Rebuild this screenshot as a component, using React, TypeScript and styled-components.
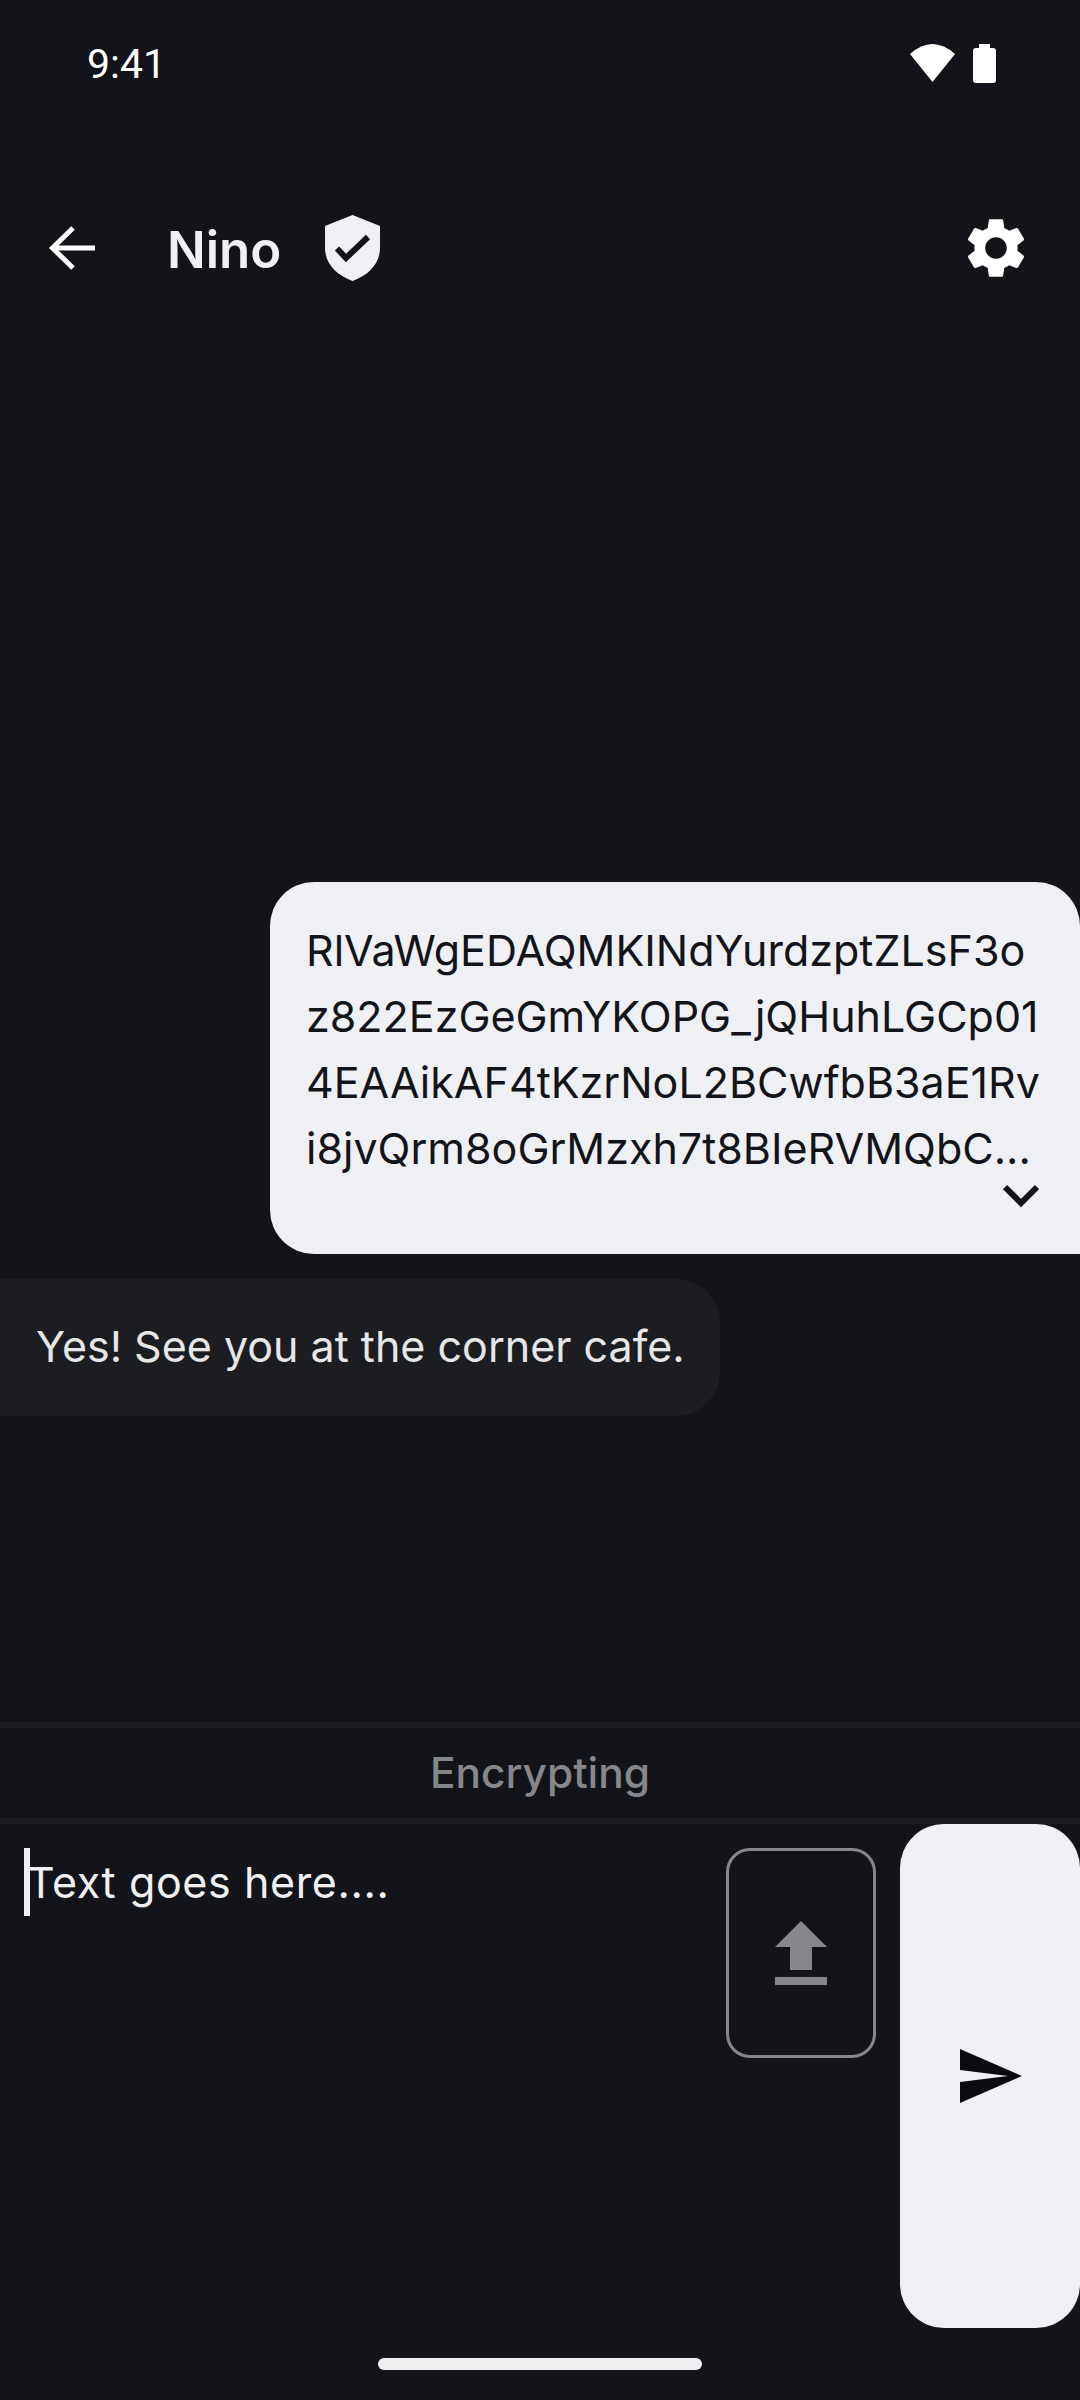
import React from 'react';
import styled, { createGlobalStyle } from 'styled-components';

const GlobalStyle = createGlobalStyle`
  html, body {
    margin: 0;
    padding: 0;
    background: #131419;
  }
`;

const Page = styled.div`
  width: 1080px;
  height: 2400px;
  background: #131419;
  display: flex;
  flex-direction: column;
  overflow: hidden;
  font-family: Inter, 'Liberation Sans', sans-serif;
`;

const StatusBar = styled.div`
  height: 126px;
  box-sizing: border-box;
  padding: 44px 84px 0 87px;
  display: flex;
  justify-content: space-between;
  align-items: flex-start;
`;

const Clock = styled.div`
  font-family: Roboto, sans-serif;
  font-size: 41px;
  line-height: 41px;
  color: #ffffff;
`;

const StatusIcons = styled.div`
  display: flex;
  gap: 18px;
`;

const TopBar = styled.div`
  height: 244px;
  box-sizing: border-box;
  padding: 0 48px 0 48px;
  display: flex;
  align-items: center;
  flex-shrink: 0;
`;

const Title = styled.div`
  font-size: 51px;
  line-height: 66px;
  font-weight: 600;
  color: #eff0f4;
  padding-top: 4px;
  margin-left: 71px;
  margin-right: 44px;
`;

const Spacer = styled.div`
  flex: 1;
`;

const Messages = styled.div`
  flex: 1;
  display: flex;
  flex-direction: column;
  justify-content: flex-end;
  gap: 25px;
  padding-bottom: 306px;
`;

const SentBubble = styled.div`
  position: relative;
  align-self: flex-end;
  width: 810px;
  height: 372px;
  box-sizing: border-box;
  padding: 35px 36px;
  background: #eff0f4;
  color: #131419;
  border-radius: 44px 44px 0 44px;
  font-size: 43px;
  line-height: 66px;
`;

const Line = styled.div`
  white-space: nowrap;
`;

const ExpandIcon = styled.svg`
  position: absolute;
  left: 733px;
  top: 302px;
`;

const ReceivedBubble = styled.div`
  align-self: flex-start;
  width: 720px;
  height: 137px;
  box-sizing: border-box;
  padding: 34px 36px;
  background: #1c1d20;
  color: #e6e6e8;
  border-radius: 0 44px 44px 0;
  font-size: 43px;
  line-height: 66px;
  white-space: nowrap;
`;

const Divider = styled.div`
  height: 6px;
  background: #1c1d20;
`;

const EncryptBar = styled.div`
  height: 90px;
  box-sizing: border-box;
  padding-bottom: 2px;
  display: flex;
  align-items: center;
  justify-content: center;
  font-size: 42.4px;
  font-weight: 500;
  color: #86878a;
`;

const Composer = styled.div`
  height: 504px;
  display: flex;
  gap: 24px;
`;

const Field = styled.div`
  flex: 1;
  box-sizing: border-box;
  padding: 24px 0 0 24px;
  display: flex;
  align-items: flex-start;
  font-size: 43px;
  line-height: 68px;
  letter-spacing: 0.6px;
  color: #f0f0f2;
`;

const Cursor = styled.div`
  width: 6px;
  height: 68px;
  margin-right: -3px;
  background: #f0f0f2;
  flex-shrink: 0;
`;

const UploadButton = styled.div`
  width: 150px;
  height: 210px;
  box-sizing: border-box;
  margin-top: 24px;
  border: 3px solid #86878a;
  border-radius: 24px;
  display: flex;
  align-items: center;
  justify-content: center;
`;

const SendButton = styled.div`
  width: 180px;
  padding-left: 2px;
  box-sizing: border-box;
  background: #eff0f4;
  border-radius: 44px;
  display: flex;
  align-items: center;
  justify-content: center;
`;

const HomeArea = styled.div`
  height: 72px;
  display: flex;
  justify-content: center;
  padding-top: 30px;
  box-sizing: border-box;
`;

const HomeBar = styled.div`
  width: 324px;
  height: 12px;
  border-radius: 6px;
  background: #eeeff0;
`;

const GEAR =
  'M19.14 12.94c.04-.3.06-.61.06-.94 0-.32-.02-.64-.07-.94l2.03-1.58c.18-.14.23-.41.12-.61l-1.92-3.32c-.12-.22-.37-.29-.59-.22l-2.39.96c-.5-.38-1.03-.7-1.62-.94l-.36-2.54c-.04-.24-.24-.41-.48-.41h-3.84c-.24 0-.43.17-.47.41l-.36 2.54c-.59.24-1.13.57-1.62.94l-2.39-.96c-.22-.08-.47 0-.59.22L2.74 8.87c-.12.21-.08.47.12.61l2.03 1.58c-.05.3-.09.63-.09.94s.02.64.07.94l-2.03 1.58c-.18.14-.23.41-.12.61l1.92 3.32c.12.22.37.29.59.22l2.39-.96c.5.38 1.03.7 1.62.94l.36 2.54c.05.24.24.41.48.41h3.84c.24 0 .44-.17.47-.41l.36-2.54c.59-.24 1.13-.56 1.62-.94l2.39.96c.22.08.47 0 .59-.22l1.92-3.32c.12-.22.07-.47-.12-.61l-2.01-1.58zM12 15.6c-1.98 0-3.6-1.62-3.6-3.6s1.62-3.6 3.6-3.6 3.6 1.62 3.6 3.6-1.62 3.6-3.6 3.6z';

export default function App() {
  return (
    <Page>
      <GlobalStyle />
      <StatusBar>
        <Clock>9:41</Clock>
        <StatusIcons>
          <svg width="45" height="38" viewBox="0 0 45 38">
            <path d="M0 10 Q22.5 -10 45 10 L22.5 38 Z" fill="#fff" />
          </svg>
          <svg width="23" height="39" viewBox="0 0 23 39">
            <path
              d="M6 0 H17 V4 H20 Q23 4 23 7 V36 Q23 39 20 39 H3 Q0 39 0 36 V7 Q0 4 3 4 H6 Z"
              fill="#fff"
            />
          </svg>
        </StatusIcons>
      </StatusBar>

      <TopBar>
        <svg width="48" height="48" viewBox="0 0 48 48">
          <path
            d="M47 24 H5 M25 4 L4.5 24 L25 44"
            fill="none"
            stroke="#fff"
            strokeWidth="5"
          />
        </svg>
        <Title>Nino</Title>
        <svg width="55" height="66" viewBox="0 0 55 66">
          <path
            d="M27.5 0 L55 11 V33 C55 48 44 60 27.5 66 C11 60 0 48 0 33 V11 Z"
            fill="#eff0f4"
          />
          <path
            d="M12 33.5 L21 43 L43 22"
            fill="none"
            stroke="#131419"
            strokeWidth="6"
          />
        </svg>
        <Spacer />
        <svg width="72" height="72" viewBox="0 0 24 24">
          <path d={GEAR} fill="#fff" />
        </svg>
      </TopBar>

      <Messages>
        <SentBubble>
          <Line>RlVaWgEDAQMKINdYurdzptZLsF3o</Line>
          <Line>z822EzGeGmYKOPG_jQHuhLGCp01</Line>
          <Line>4EAAikAF4tKzrNoL2BCwfbB3aE1Rv</Line>
          <Line>i8jvQrm8oGrMzxh7t8BIeRVMQbC...</Line>
          <ExpandIcon width="36" height="24" viewBox="0 0 36 24">
            <path
              d="M2 3 L18 19 L34 3"
              fill="none"
              stroke="#131419"
              strokeWidth="6"
            />
          </ExpandIcon>
        </SentBubble>
        <ReceivedBubble>Yes! See you at the corner cafe.</ReceivedBubble>
      </Messages>

      <Divider />
      <EncryptBar>Encrypting</EncryptBar>
      <Divider />

      <Composer>
        <Field>
          <Cursor />
          Text goes here....
        </Field>
        <UploadButton>
          <svg width="52" height="64" viewBox="0 0 52 64">
            <path d="M26 0 L52 26 H37 V49 H15 V26 H0 Z" fill="#86878a" />
            <rect x="0" y="56" width="52" height="8" fill="#86878a" />
          </svg>
        </UploadButton>
        <SendButton>
          <svg width="62" height="54" viewBox="0 0 62 54">
            <path d="M0 0 L62 27 L0 54 V33 L48 27 L0 21 Z" fill="#0a0b10" />
          </svg>
        </SendButton>
      </Composer>

      <HomeArea>
        <HomeBar />
      </HomeArea>
    </Page>
  );
}
